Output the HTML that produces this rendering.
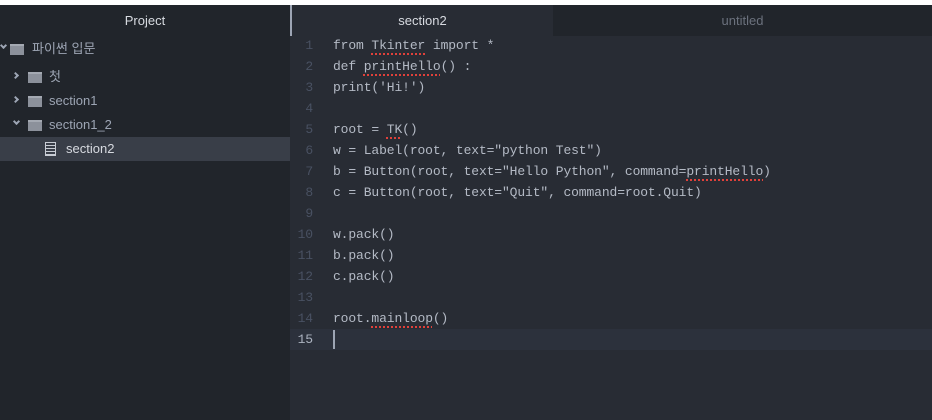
<!DOCTYPE html>
<html><head><meta charset="utf-8"><style>
*{margin:0;padding:0;box-sizing:border-box}
body{width:932px;height:420px;overflow:hidden;background:#282c34;position:relative;font-family:"Liberation Sans","Noto Sans CJK KR",sans-serif}
.top{position:absolute;left:0;top:0;width:932px;height:5px;background:#fff}
.side{position:absolute;left:0;top:5px;width:290px;height:415px;background:#21252b}
.ph{height:31px;line-height:31px;text-align:center;color:#d7dae0;font-size:13px}
.row{position:absolute;left:0;width:290px;height:24px;line-height:24px;color:#9da5b4;font-size:13px;white-space:nowrap}
.sel{background:#393e48;color:#d7dae0}
.fold{position:absolute;top:7px;width:14px;height:11px;background:#8c919b;border-top:2px solid #a4a9b2}
.arr{position:absolute;top:8px;width:5px;height:5px;border-right:2px solid #9da5b4;border-bottom:2px solid #9da5b4}
.r{transform:rotate(-45deg)}
.d{transform:rotate(45deg);top:6px}
.tx{position:absolute}
.tabs{position:absolute;left:290px;top:5px;width:642px;height:31px}
.t1{position:absolute;left:0;top:0;width:263px;height:31px;background:#282c34;border-left:2px solid #9da5b4;color:#d7dae0;font-size:13px;text-align:center;line-height:31px}
.t2{position:absolute;left:263px;top:0;width:379px;height:31px;background:#21252b;color:#6b717d;font-size:13px;text-align:center;line-height:31px}
.code{position:absolute;left:290px;top:35px;width:642px;font-family:"Liberation Mono",monospace;font-size:13px;letter-spacing:-0.12px}
.l{height:21px;line-height:21px;position:relative;white-space:pre;color:#b4bac5}
.n{position:absolute;left:0;width:23px;text-align:right;color:#495162}
.c{position:absolute;left:43px}
.cur{background:#2c313c}
.cur .n{color:#abb2bf}
u{text-decoration:underline dotted #e0413b;text-underline-offset:4px;text-decoration-thickness:2px}
.caret{position:absolute;left:43px;top:1px;width:2px;height:19px;background:#9da5b4}
</style></head><body>
<div class="top"></div>
<div class="side">
<div class="ph">Project</div>
</div>
<div class="row" style="top:37px"><span class="arr d" style="left:1px"></span><span class="fold" style="left:10px"></span><span class="tx" style="left:32px">파이썬 입문</span></div>
<div class="row" style="top:65px"><span class="arr r" style="left:13px"></span><span class="fold" style="left:28px"></span><span class="tx" style="left:49px">첫</span></div>
<div class="row" style="top:89px"><span class="arr r" style="left:13px"></span><span class="fold" style="left:28px"></span><span class="tx" style="left:49px">section1</span></div>
<div class="row" style="top:113px"><span class="arr d" style="left:14px"></span><span class="fold" style="left:28px"></span><span class="tx" style="left:49px">section1_2</span></div>
<div class="row sel" style="top:137px"><span style="position:absolute;left:45px;top:5px;width:11px;height:14px;border:1.5px solid #c8ccd4;background:repeating-linear-gradient(#393e48 0 2px,#c8ccd4 2px 3px)"></span><span class="tx" style="left:66px">section2</span></div>
<div class="tabs"><div class="t1">section2</div><div class="t2">untitled</div></div>
<div class="code">
<div class="l"><span class="n">1</span><span class="c">from <u>Tkinter</u> import *</span></div>
<div class="l"><span class="n">2</span><span class="c">def <u>printHello</u>() :</span></div>
<div class="l"><span class="n">3</span><span class="c">print('Hi!')</span></div>
<div class="l"><span class="n">4</span></div>
<div class="l"><span class="n">5</span><span class="c">root = <u>TK</u>()</span></div>
<div class="l"><span class="n">6</span><span class="c">w = Label(root, text="python Test")</span></div>
<div class="l"><span class="n">7</span><span class="c">b = Button(root, text="Hello Python", command=<u>printHello</u>)</span></div>
<div class="l"><span class="n">8</span><span class="c">c = Button(root, text="Quit", command=root.Quit)</span></div>
<div class="l"><span class="n">9</span></div>
<div class="l"><span class="n">10</span><span class="c">w.pack()</span></div>
<div class="l"><span class="n">11</span><span class="c">b.pack()</span></div>
<div class="l"><span class="n">12</span><span class="c">c.pack()</span></div>
<div class="l"><span class="n">13</span></div>
<div class="l"><span class="n">14</span><span class="c">root.<u>mainloop</u>()</span></div>
<div class="l cur"><span class="n">15</span><span class="caret"></span></div>
</div>
</body></html>
